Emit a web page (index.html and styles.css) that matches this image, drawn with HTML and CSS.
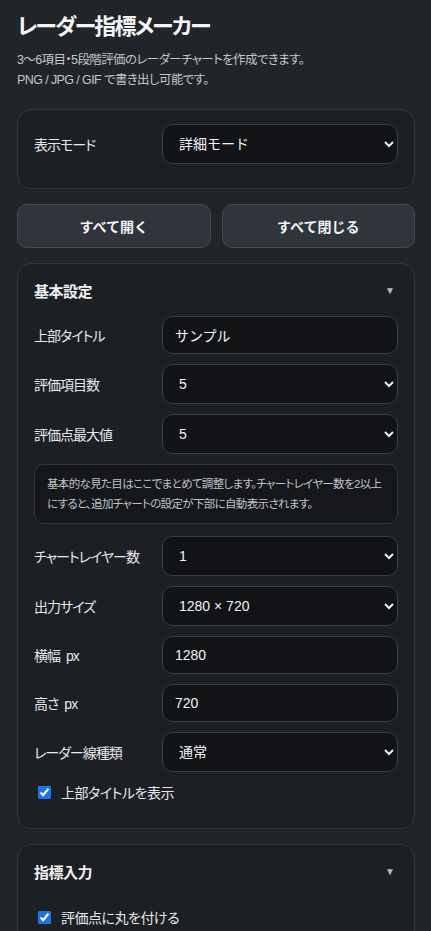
FILE: index.html
```html
<!DOCTYPE html>
<html lang="ja">
<head>
    <meta charset="UTF-8">
    <meta name="viewport" content="width=device-width, initial-scale=1.0">
    <title>レーダー指標メーカー</title>
    <link rel="stylesheet" href="styles.css">
</head>
<body>
    <div class="container">
        <h1>レーダー指標メーカー</h1>
        <p class="lead">3〜6項目・5段階評価のレーダーチャートを作成できます。<br>PNG / JPG / GIF で書き出し可能です。</p>

        <div class="card mode-card">
            <div class="row">
                <label>表示モード</label>
                <select><option>詳細モード</option><option>かんたんモード</option></select>
            </div>
        </div>

        <div class="toggle-buttons">
            <button>すべて開く</button>
            <button>すべて閉じる</button>
        </div>

        <div class="card">
            <div class="card-head">
                <h2>基本設定</h2>
                <span class="caret">▼</span>
            </div>
            <div class="fields">
                <div class="row">
                    <label>上部タイトル</label>
                    <input type="text" value="サンプル">
                </div>
                <div class="row">
                    <label>評価項目数</label>
                    <select><option>5</option></select>
                </div>
                <div class="row">
                    <label>評価点最大値</label>
                    <select><option>5</option></select>
                </div>
                <div class="note">基本的な見た目はここでまとめて調整します。チャートレイヤー数を2以上にすると、追加チャートの設定が下部に自動表示されます。</div>
                <div class="row">
                    <label>チャートレイヤー数</label>
                    <select><option>1</option></select>
                </div>
                <div class="row">
                    <label>出力サイズ</label>
                    <select><option>1280 × 720</option></select>
                </div>
                <div class="row">
                    <label>横幅 px</label>
                    <input type="text" value="1280">
                </div>
                <div class="row">
                    <label>高さ px</label>
                    <input type="text" value="720">
                </div>
                <div class="row">
                    <label>レーダー線種類</label>
                    <select><option>通常</option></select>
                </div>
                <label class="check"><input type="checkbox" checked> 上部タイトルを表示</label>
            </div>
        </div>

        <div class="card">
            <div class="card-head">
                <h2>指標入力</h2>
                <span class="caret">▼</span>
            </div>
            <div class="fields spaced">
                <label class="check"><input type="checkbox" checked> 評価点に丸を付ける</label>
            </div>
        </div>
    </div>
</body>
</html>
```

FILE: styles.css
```css
body {
    font-family: "Liberation Sans", "Noto Sans CJK JP", sans-serif;
    background-color: #212428;
    color: #eceef0;
    margin: 0;
    padding: 0 16px 0 17px;
    font-feature-settings: "palt";
}
.container {
    display: flex;
    flex-direction: column;
    gap: 15px;
}
h1 {
    font-size: 22px;
    font-weight: bold;
    margin: 13px 0 0;
    line-height: 28px;
    letter-spacing: -1.8px;
    color: #f4f5f6;
}
.lead {
    margin: -6px 0 4px;
    font-size: 12.5px;
    line-height: 20px;
    letter-spacing: -0.6px;
    color: #c3c7cc;
}
.card {
    background-color: #1c1f23;
    border: 1px solid #33373d;
    border-radius: 14px;
    padding: 16px 16px 16px;
}
.mode-card {
    padding-top: 14px;
    padding-bottom: 24px;
}
.card-head {
    display: flex;
    justify-content: space-between;
    align-items: center;
    height: 24px;
    margin-top: -2px;
    margin-bottom: 14px;
}
.card-head h2 {
    font-size: 15px;
    margin: 0;
    letter-spacing: -0.5px;
    color: #f0f1f2;
}
.caret {
    font-size: 10px;
    color: #b4b9c0;
    margin-right: 3px;
}
.fields {
    display: flex;
    flex-direction: column;
    gap: 10px;
    padding-bottom: 10px;
}
.fields.spaced {
    padding-top: 10px;
    padding-bottom: 0;
}
.row {
    display: grid;
    grid-template-columns: 128px 1fr;
    align-items: center;
}
.row label {
    font-size: 14px;
    letter-spacing: -1px;
    word-spacing: 3px;
    color: #e6e8ea;
}
input[type="text"],
select {
    font-family: "Liberation Sans", "Noto Sans CJK JP", sans-serif;
    font-size: 14px;
    color: #f2f3f4;
    background-color: #111316;
    border: 1px solid #3b3f46;
    border-radius: 10px;
    box-sizing: border-box;
    width: 100%;
    color-scheme: dark;
}
input[type="text"] {
    height: 38px;
    padding: 0 12px;
}
select {
    height: 40px;
    padding: 0 12px;
}
.note {
    font-size: 11.5px;
    line-height: 20px;
    letter-spacing: -0.65px;
    color: #bfc3c8;
    background-color: #15171a;
    border: 1px solid #34383e;
    border-radius: 10px;
    padding: 9px 12px;
    margin-bottom: 2px;
}
.check {
    display: flex;
    align-items: center;
    gap: 10px;
    font-size: 14px;
    letter-spacing: -0.5px;
    color: #e6e8ea;
    padding-left: 4px;
    height: 20px;
}
.check input {
    margin: 0;
    width: 13px;
    height: 13px;
    accent-color: #1a73e8;
}
.toggle-buttons {
    display: grid;
    grid-template-columns: 1fr 1fr;
    gap: 11px;
}
.toggle-buttons button {
    height: 44px;
    font-family: "Liberation Sans", "Noto Sans CJK JP", sans-serif;
    font-size: 14px;
    font-weight: bold;
    color: #f2f3f4;
    background-color: #30343b;
    border: 1px solid #464a51;
    border-radius: 10px;
    cursor: pointer;
}
.toggle-buttons button:hover {
    background-color: #3a3f47;
}
```
